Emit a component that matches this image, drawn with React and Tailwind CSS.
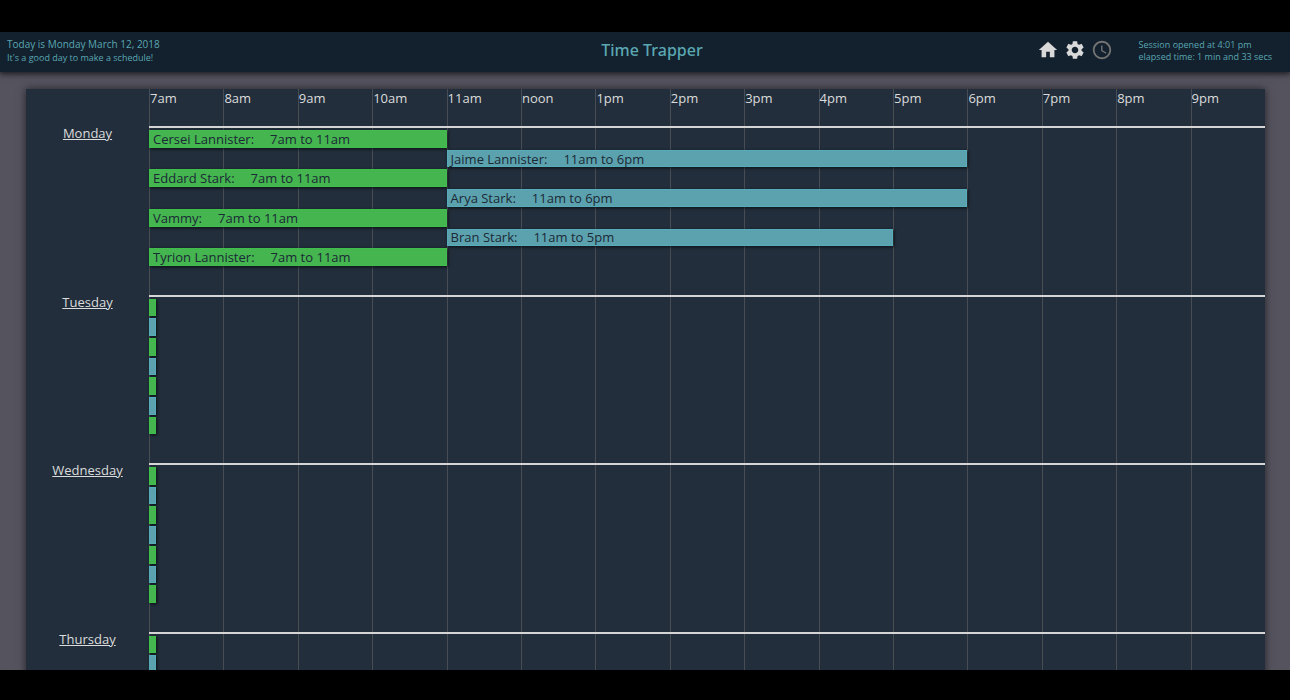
import { MdHome, MdSettings, MdSchedule } from "react-icons/md";

const HOURS = ["7am", "8am", "9am", "10am", "11am", "noon", "1pm", "2pm", "3pm", "4pm", "5pm", "6pm", "7pm", "8pm", "9pm"];

const MONDAY = [
  { name: "Cersei Lannister", text: "7am to 11am", start: 7, end: 11 },
  { name: "Jaime Lannister", text: "11am to 6pm", start: 11, end: 18 },
  { name: "Eddard Stark", text: "7am to 11am", start: 7, end: 11 },
  { name: "Arya Stark", text: "11am to 6pm", start: 11, end: 18 },
  { name: "Vammy", text: "7am to 11am", start: 7, end: 11 },
  { name: "Bran Stark", text: "11am to 5pm", start: 11, end: 17 },
  { name: "Tyrion Lannister", text: "7am to 11am", start: 7, end: 11 },
];

const EMPTY = MONDAY.map(() => null);

const DAYS = [
  { day: "Monday", shifts: MONDAY },
  { day: "Tuesday", shifts: EMPTY },
  { day: "Wednesday", shifts: EMPTY },
  { day: "Thursday", shifts: EMPTY },
];

const pct = (hours) => `${(hours / HOURS.length) * 100}%`;

function Header() {
  return (
    <header className="relative z-10 grid h-10 shrink-0 grid-cols-[1fr_auto_1fr] items-center bg-[#13202d] pb-[2px] text-[#5aa7b2] shadow-[0_1px_6px_1px_rgba(0,0,0,0.7)]">
      <div className="pl-[7px]">
        <p className="text-[10px] leading-[13px]">Today is Monday March 12, 2018</p>
        <p className="text-[9px] leading-[13px]">It's a good day to make a schedule!</p>
      </div>
      <h1 className="pb-[2px] pl-3.5 font-['Noto_Sans','Open_Sans',sans-serif] text-base leading-5 font-medium">Time Trapper</h1>
      <div className="flex items-center justify-end pr-[18px]">
        <nav className="flex gap-[5px] pb-[2px] text-[#d9d9d9]">
          <button type="button" aria-label="Home"><MdHome size={22} /></button>
          <button type="button" aria-label="Settings"><MdSettings size={22} /></button>
          <button type="button" aria-label="History" className="text-[#727272]"><MdSchedule size={22} /></button>
        </nav>
        <div className="ml-[26px] text-[9px] leading-3">
          <p>Session opened at 4:01 pm</p>
          <p>elapsed time: 1 min and 33 secs</p>
        </div>
      </div>
    </header>
  );
}

function Shift({ shift, odd }) {
  const color = odd
    ? "bg-[#5ba2ae] border-[#55adbb]"
    : "bg-[#45b550] border-[#3fbe4c]";
  const style = shift
    ? { marginLeft: pct(shift.start - 7), width: pct(shift.end - shift.start) }
    : undefined;
  return (
    <li
      className={`flex items-center border shadow-[1px_1px_3px_rgba(0,0,0,0.7)] ${color} ${shift ? "px-[3px]" : "w-[7px]"}`}
      style={style}
    >
      {shift && (
        <p className="flex gap-4 text-[13px] leading-4 whitespace-nowrap text-[#1b2936]">
          <span>{shift.name}:</span>
          <span>{shift.text}</span>
        </p>
      )}
    </li>
  );
}

export default function App() {
  return (
    <div className="flex h-screen flex-col bg-black pt-8 pb-[30px] font-['Open_Sans','Noto_Sans',sans-serif]">
      <Header />
      <main className="min-h-0 flex-1 overflow-hidden bg-[#55535e] pt-[17px] pr-[25px] pl-[26px]">
        <section className="grid grid-cols-[123px_1fr] bg-[#222e3b] text-[13px] text-[#dcdcdc] shadow-[0_0_8px_rgba(0,0,0,0.6)]">
          <div className="col-start-2 row-start-1 grid grid-cols-[repeat(15,minmax(0,1fr))]">
            {HOURS.map((hour) => (
              <div key={hour} className="border-l border-[#484d53] leading-[18px]">{hour}</div>
            ))}
          </div>
          <div className="col-span-2 col-start-1 row-start-1 mt-[37px] grid h-[674px] auto-rows-fr">
            {DAYS.map(({ day, shifts }) => (
              <div key={day} className="grid grid-cols-[123px_1fr]">
                <h2 className="text-center leading-[14px]">
                  <a href={`#${day}`} className="underline">{day}</a>
                </h2>
                <ul className="grid h-[140px] auto-rows-fr gap-[2px] border-t-2 border-[#d5d5d8] pt-[2px]">
                  {shifts.map((shift, i) => (
                    <Shift key={i} shift={shift} odd={i % 2 === 1} />
                  ))}
                </ul>
              </div>
            ))}
          </div>
        </section>
      </main>
    </div>
  );
}
